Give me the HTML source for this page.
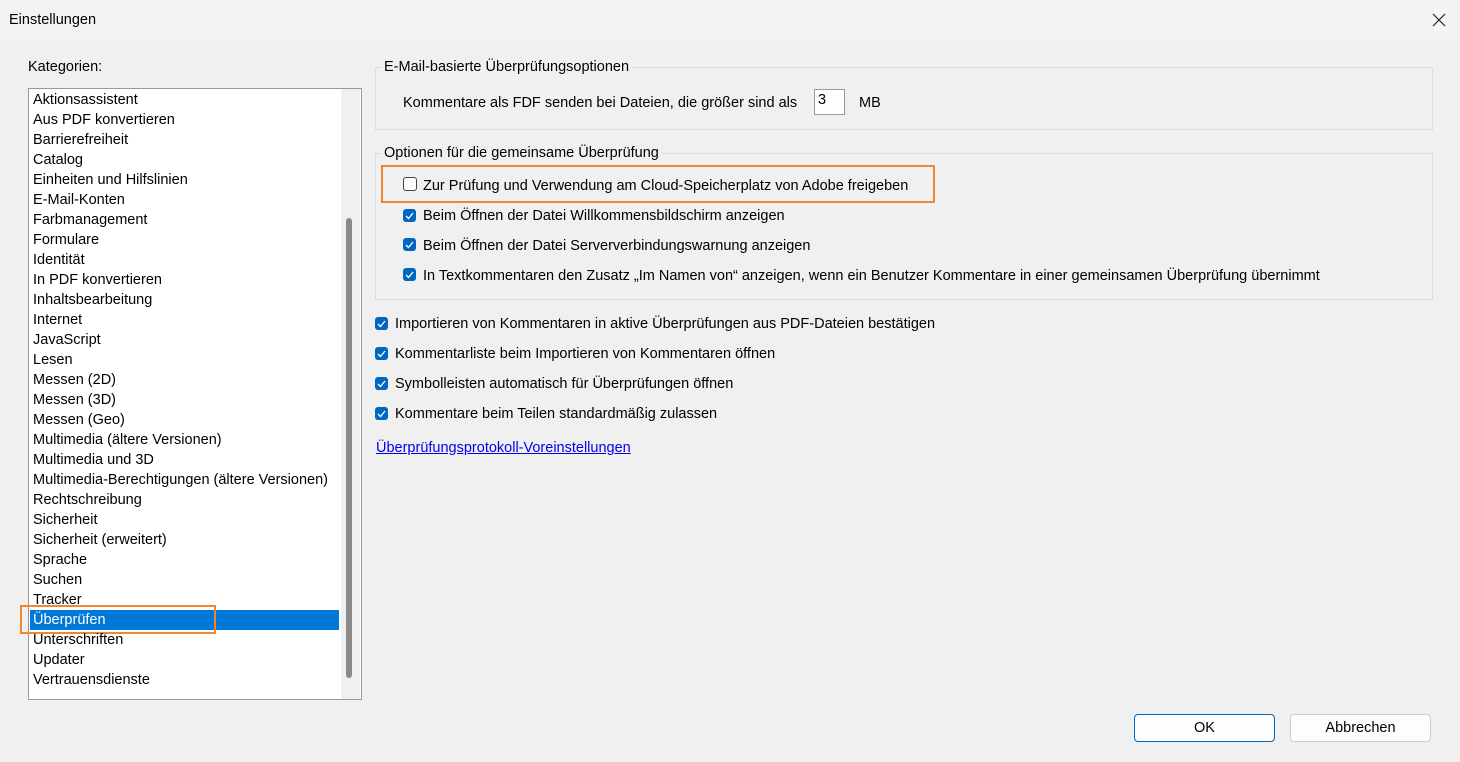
<!DOCTYPE html>
<html><head><style>
body{margin:0;width:1460px;height:762px;background:#f0f0f0;font-family:"Liberation Sans",Arial,sans-serif;font-size:14.5px;color:#000;position:relative;overflow:hidden}
.a{position:absolute;white-space:nowrap}
.grp{position:absolute;border:1px solid #dcdcdc}
.leg{position:absolute;background:#f0f0f0;padding:0 3px}
.cb{position:absolute;width:13px;height:13px;border-radius:3px;background:#0067c0}
.cb svg{position:absolute;left:2px;top:2px}
.un{position:absolute;width:12px;height:12px;border:1px solid #444;border-radius:3px;background:#fff}
</style></head><body>
<div class="a" style="left:0;top:0;width:1460px;height:40px;background:#f3f3f3"></div>
<div class="a" style="left:9px;top:12px">Einstellungen</div>
<svg class="a" style="left:1432px;top:13px" width="14" height="14"><path d="M1 1L13 13M13 1L1 13" stroke="#222" stroke-width="1.2"/></svg>
<div class="a" style="left:28px;top:59px">Kategorien:</div>
<div class="a" style="left:28px;top:88px;width:332px;height:610px;background:#fff;border:1px solid #999"></div>
<div class="a" style="left:341px;top:89px;width:19px;height:610px;background:#f0f0f0"></div>
<div class="a" style="left:346px;top:218px;width:6px;height:460px;background:#8a8a8a;border-radius:3px"></div>
<div class="a" style="left:30px;top:610px;width:309px;height:20px;background:#0078d7"></div>
<div class="a" style="left:20px;top:605px;width:192px;height:25px;border:2px solid #f0862e"></div>
<div class="a" style="left:33px;top:90px;line-height:20px">
Aktionsassistent<br>Aus PDF konvertieren<br>Barrierefreiheit<br>Catalog<br>Einheiten und Hilfslinien<br>E-Mail-Konten<br>Farbmanagement<br>Formulare<br>Identität<br>In PDF konvertieren<br>Inhaltsbearbeitung<br>Internet<br>JavaScript<br>Lesen<br>Messen (2D)<br>Messen (3D)<br>Messen (Geo)<br>Multimedia (ältere Versionen)<br>Multimedia und 3D<br>Multimedia-Berechtigungen (ältere Versionen)<br>Rechtschreibung<br>Sicherheit<br>Sicherheit (erweitert)<br>Sprache<br>Suchen<br>Tracker<br><span style="color:#fff">Überprüfen</span><br>Unterschriften<br>Updater<br>Vertrauensdienste</div>

<div class="grp" style="left:375px;top:67px;width:1056px;height:61px"></div>
<div class="leg" style="left:381px;top:59px">E-Mail-basierte Überprüfungsoptionen</div>
<div class="a" style="left:403px;top:95px">Kommentare als FDF senden bei Dateien, die größer sind als</div>
<div class="a" style="left:814px;top:89px;width:31px;height:26px;background:#fff;border:1px solid #999;box-sizing:border-box;padding:2px 3px">3</div>
<div class="a" style="left:859px;top:95px">MB</div>

<div class="grp" style="left:375px;top:153px;width:1056px;height:145px"></div>
<div class="leg" style="left:381px;top:145px">Optionen für die gemeinsame Überprüfung</div>
<div class="a" style="left:381px;top:165px;width:554px;height:38px;border:2px solid #f0862e;box-sizing:border-box"></div>
<div class="un" style="left:403px;top:177px"></div>
<div class="a" style="left:423px;top:178px">Zur Prüfung und Verwendung am Cloud-Speicherplatz von Adobe freigeben</div>

<div class="cb" style="left:403px;top:209px"><svg width="9" height="9"><path d="M1 5L3.5 7.5L8 2" stroke="#fff" stroke-width="1.3" fill="none"/></svg></div>
<div class="a" style="left:423px;top:208px">Beim Öffnen der Datei Willkommensbildschirm anzeigen</div>
<div class="cb" style="left:403px;top:238px"><svg width="9" height="9"><path d="M1 5L3.5 7.5L8 2" stroke="#fff" stroke-width="1.3" fill="none"/></svg></div>
<div class="a" style="left:423px;top:238px">Beim Öffnen der Datei Serververbindungswarnung anzeigen</div>
<div class="cb" style="left:403px;top:268px"><svg width="9" height="9"><path d="M1 5L3.5 7.5L8 2" stroke="#fff" stroke-width="1.3" fill="none"/></svg></div>
<div class="a" style="left:423px;top:268px">In Textkommentaren den Zusatz „Im Namen von“ anzeigen, wenn ein Benutzer Kommentare in einer gemeinsamen Überprüfung übernimmt</div>

<div class="cb" style="left:375px;top:317px"><svg width="9" height="9"><path d="M1 5L3.5 7.5L8 2" stroke="#fff" stroke-width="1.3" fill="none"/></svg></div>
<div class="a" style="left:395px;top:316px">Importieren von Kommentaren in aktive Überprüfungen aus PDF-Dateien bestätigen</div>
<div class="cb" style="left:375px;top:347px"><svg width="9" height="9"><path d="M1 5L3.5 7.5L8 2" stroke="#fff" stroke-width="1.3" fill="none"/></svg></div>
<div class="a" style="left:395px;top:346px">Kommentarliste beim Importieren von Kommentaren öffnen</div>
<div class="cb" style="left:375px;top:377px"><svg width="9" height="9"><path d="M1 5L3.5 7.5L8 2" stroke="#fff" stroke-width="1.3" fill="none"/></svg></div>
<div class="a" style="left:395px;top:376px">Symbolleisten automatisch für Überprüfungen öffnen</div>
<div class="cb" style="left:375px;top:407px"><svg width="9" height="9"><path d="M1 5L3.5 7.5L8 2" stroke="#fff" stroke-width="1.3" fill="none"/></svg></div>
<div class="a" style="left:395px;top:406px">Kommentare beim Teilen standardmäßig zulassen</div>
<div class="a" style="left:376px;top:440px;color:#0000ee;text-decoration:underline">Überprüfungsprotokoll-Voreinstellungen</div>

<div class="a" style="left:1134px;top:714px;width:141px;height:28px;border:1px solid #0067c0;border-radius:4px;background:#fdfdfd;box-sizing:border-box;text-align:center;line-height:26px">OK</div>
<div class="a" style="left:1290px;top:714px;width:141px;height:28px;border:1px solid #ccc;border-radius:4px;background:#fdfdfd;box-sizing:border-box;text-align:center;line-height:26px">Abbrechen</div>
</body></html>
